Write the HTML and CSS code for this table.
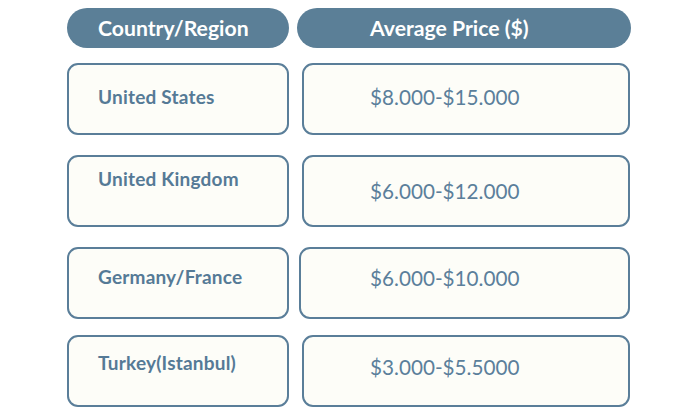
FILE: index.html
```html
<!DOCTYPE html>
<html lang="en">
<head>
<meta charset="utf-8">
<title>Average Price by Country/Region</title>
<link rel="stylesheet" href="styles.css">
</head>
<body>
<div class="table">
  <div class="row head-row">
    <div class="head head-left">Country/Region</div>
    <div class="head head-right">Average Price ($)</div>
  </div>
  <div class="row row-1">
    <div class="cell country pt-20">United States</div>
    <div class="cell price pt-20">$8.000-$15.000</div>
  </div>
  <div class="row row-2">
    <div class="cell country pt-10">United Kingdom</div>
    <div class="cell price pt-22">$6.000-$12.000</div>
  </div>
  <div class="row row-3">
    <div class="cell country pt-16">Germany/France</div>
    <div class="cell price price-wide pt-17">$6.000-$10.000</div>
  </div>
  <div class="row row-4">
    <div class="cell country pt-14">Turkey(Istanbul)</div>
    <div class="cell price pt-18">$3.000-$5.5000</div>
  </div>
</div>
</body>
</html>
```
FILE: styles.css
```css
html, body {
  margin: 0;
  padding: 0;
  background: #ffffff;
}

body {
  font-family: Lato, "Open Sans", "Liberation Sans", sans-serif;
  width: 700px;
  height: 420px;
  overflow: hidden;
}

.table {
  padding: 8px 0 0 67px;
  display: flex;
  flex-direction: column;
}

.row {
  display: flex;
}

.head-row {
  gap: 8px;
}

.row-1 { margin-top: 15px; gap: 13px; }
.row-2 { margin-top: 20px; gap: 13px; }
.row-3 { margin-top: 20px; gap: 10px; }
.row-4 { margin-top: 16px; gap: 13px; }

.head {
  height: 40px;
  border-radius: 20px;
  background: #5b7f97;
  color: #ffffff;
  font-weight: 700;
  font-size: 21.2px;
  line-height: 40px;
  box-sizing: border-box;
}

.head-left {
  width: 222px;
  padding-left: 31px;
}

.head-right {
  width: 334px;
  padding-left: 73px;
}

.cell {
  height: 72px;
  box-sizing: border-box;
  border: 2px solid #5a7e99;
  border-radius: 11px;
  background: #fdfdf8;
  line-height: 24px;
}

.country {
  width: 222px;
  padding-left: 29px;
  font-weight: 700;
  font-size: 19px;
  letter-spacing: 0.2px;
  color: #557a96;
}

.price {
  width: 328px;
  padding-left: 66px;
  font-size: 20.7px;
  color: #5b7f9b;
}

.price-wide {
  width: 331px;
  padding-left: 69px;
}

.pt-10 { padding-top: 10px; }
.pt-14 { padding-top: 14px; }
.pt-16 { padding-top: 16px; }
.pt-17 { padding-top: 17px; }
.pt-18 { padding-top: 18px; }
.pt-20 { padding-top: 20px; }
.pt-22 { padding-top: 22px; }
```
